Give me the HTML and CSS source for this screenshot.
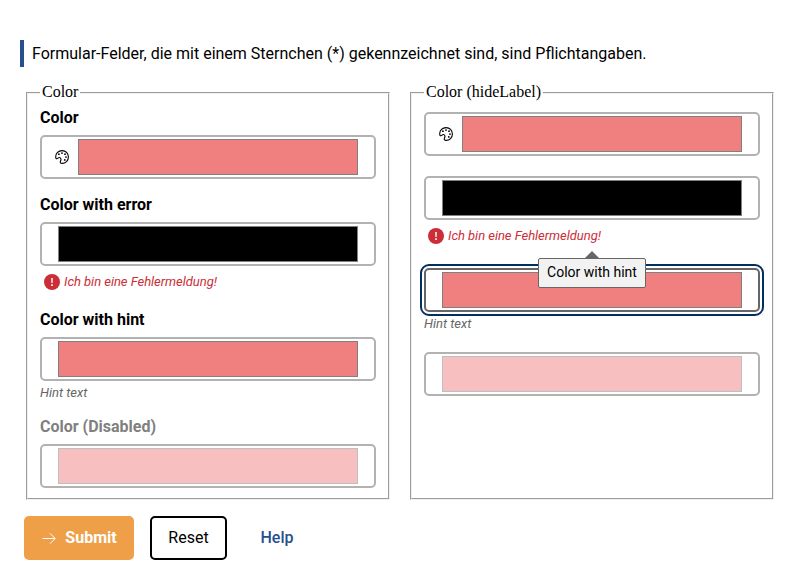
FILE: index.html
```html
<!DOCTYPE html>
<html lang="de">
<head>
<meta charset="utf-8">
<title>Color</title>
<link rel="stylesheet" href="styles.css">
</head>
<body>
<svg class="sprite" aria-hidden="true">
  <symbol id="palette" viewBox="0 0 14 14">
    <path d="M.7 7.2C.5 3.4 3.5.6 7.1.6c3.600 0 6.300 2.800 6.300 6.400s-2.800 6.400-6.300 6.400c-1.700 0-2.200-1-1.600-2.300.7-1.500.5-2.900-.5-3.500C3.600 6.800 3 8.700 1.900 8.800 1.100 8.900.8 8.100.7 7.200Z" fill="none" stroke="currentColor" stroke-width="1.100"/>
    <g fill="currentColor"><circle cx="3.900" cy="4.200" r=".9"/><circle cx="7" cy="3.100" r=".9"/><circle cx="10" cy="4.200" r=".9"/><circle cx="11" cy="7.100" r=".9"/><circle cx="9.800" cy="9.900" r=".9"/></g>
  </symbol>
  <symbol id="alert" viewBox="0 0 16 16">
    <circle cx="8" cy="8" r="8" fill="currentColor"/>
    <path d="M7.200 4h1.600l-.2 5H7.400ZM7.200 10.300h1.600v1.600H7.200Z" fill="#fff"/>
  </symbol>
</svg>
<main class="page">
  <p class="note">Formular-Felder, die mit einem Sternchen (*) gekennzeichnet sind, sind Pflichtangaben.</p>
  <form>
    <div class="groups">
      <fieldset class="group">
        <legend>Color</legend>
        <div class="field">
          <span class="label">Color</span>
          <div class="box"><svg class="palette"><use href="#palette"/></svg><div class="swatch"></div></div>
        </div>
        <div class="field">
          <span class="label">Color with error</span>
          <div class="box"><div class="swatch black"></div></div>
          <div class="error"><svg class="alert"><use href="#alert"/></svg><span>Ich bin eine Fehlermeldung!</span></div>
        </div>
        <div class="field">
          <span class="label">Color with hint</span>
          <div class="box"><div class="swatch"></div></div>
          <div class="hint">Hint text</div>
        </div>
        <div class="field">
          <span class="label muted">Color (Disabled)</span>
          <div class="box"><div class="swatch disabled"></div></div>
        </div>
      </fieldset>
      <fieldset class="group compact">
        <legend>Color (hideLabel)</legend>
        <div class="field">
          <div class="box"><svg class="palette"><use href="#palette"/></svg><div class="swatch"></div></div>
        </div>
        <div class="field">
          <div class="box"><div class="swatch black"></div></div>
          <div class="error"><svg class="alert"><use href="#alert"/></svg><span>Ich bin eine Fehlermeldung!</span></div>
        </div>
        <div class="field">
          <div class="box focused"><div class="swatch"></div><div class="tooltip">Color with hint</div></div>
          <div class="hint">Hint text</div>
        </div>
        <div class="field">
          <div class="box"><div class="swatch disabled"></div></div>
        </div>
      </fieldset>
    </div>
    <div class="actions">
      <button type="button" class="button primary"><svg class="arrow" viewBox="0 0 14 14"><path d="M.5 7.500h12.500M8 2.300l5.200 5.200L8 12.700" fill="none" stroke="currentColor"/></svg>Submit</button>
      <button type="button" class="button outline">Reset</button>
      <button type="button" class="button ghost">Help</button>
    </div>
  </form>
</main>
</body>
</html>
```
FILE: styles.css
```css
* { box-sizing: border-box; }
body {
  margin: 0;
  background: #fff;
  color: #000;
  font: 16px/20px Roboto, sans-serif;
}
.sprite { position: absolute; width: 0; height: 0; }
.page { padding: 40px 20px 0; }
.note {
  height: 27px;
  margin: 0 0 17px;
  padding-left: 8px;
  border-left: 4px solid #264f8f;
  line-height: 27px;
}
.groups { display: flex; gap: 20px; padding-left: 6px; }
.group {
  flex: none;
  width: 364px;
  height: 416px;
  min-width: 0;
  margin: 0;
  padding: 0 12px;
  border: 2px groove #f0f0f0;
}
.group legend {
  height: 18px;
  padding: 0 2px;
  font: 16px/16px "Liberation Serif", serif;
}
.field { margin-bottom: 9px; }
.label {
  display: block;
  height: 34px;
  font-weight: 700;
  line-height: 34px;
}
.field:first-of-type .label { height: 33px; line-height: 32px; }
.label.muted { color: #808080; }
.box {
  position: relative;
  display: flex;
  align-items: center;
  height: 44px;
  padding: 0 16px;
  border: 2px solid #b2b2b2;
  border-radius: 5px;
}
.box.focused {
  border-color: #666;
  outline: 2px solid #003060;
  outline-offset: 2px;
}
.swatch {
  flex: 1;
  height: 36px;
  border: 1px solid #808080;
  background: #f08080;
}
.swatch.black { background: #000; }
.swatch.disabled { opacity: .5; }
.palette { width: 14px; height: 14px; margin: 0 9px 0 -3px; }
.error, .hint { font-size: 13px; font-style: italic; letter-spacing: -.03px; }
.error {
  display: flex;
  align-items: center;
  gap: 4px;
  height: 32px;
  margin-bottom: 5px;
  padding-left: 4px;
  color: #cc2e38;
}
.alert { width: 16px; height: 16px; }
.hint {
  height: 24px;
  margin-bottom: 5px;
  color: #666;
  line-height: 24px;
}
.compact .field { margin: 10px 0 20px; }
.compact .field + .field { margin-top: 0; }
.compact .error, .compact .hint { margin-bottom: 16px; }
.field:has(.error), .field:has(.hint),
.compact .field:has(.error), .compact .field:has(.hint) { margin-bottom: 0; }
.tooltip {
  position: absolute;
  top: -12px;
  left: 112px;
  width: 108px;
  height: 30px;
  border: 1px solid #666;
  border-radius: 2px;
  background: #f2f2f2;
  font-size: 14px;
  line-height: 27px;
  text-align: center;
}
.tooltip::before {
  content: "";
  position: absolute;
  top: -8px;
  left: 46px;
  border: solid transparent;
  border-width: 0 7px 7px;
  border-bottom-color: #666;
}
.actions { display: flex; gap: 16px; padding: 16px 0 0 4px; }
.button {
  display: flex;
  align-items: center;
  justify-content: center;
  height: 44px;
  padding: 0;
  border: 0;
  border-radius: 5px;
  background: none;
  font: 400 16px/20px Roboto, sans-serif;
}
.primary { gap: 9px; width: 110px; padding-left: 1px; background: #ef9f48; color: #fff; font-weight: 700; }
.outline { width: 77px; border: 2px solid #000; color: #000; }
.ghost { width: 68px; color: #264f8f; font-weight: 500; }
.arrow { width: 14px; height: 14px; }
```
